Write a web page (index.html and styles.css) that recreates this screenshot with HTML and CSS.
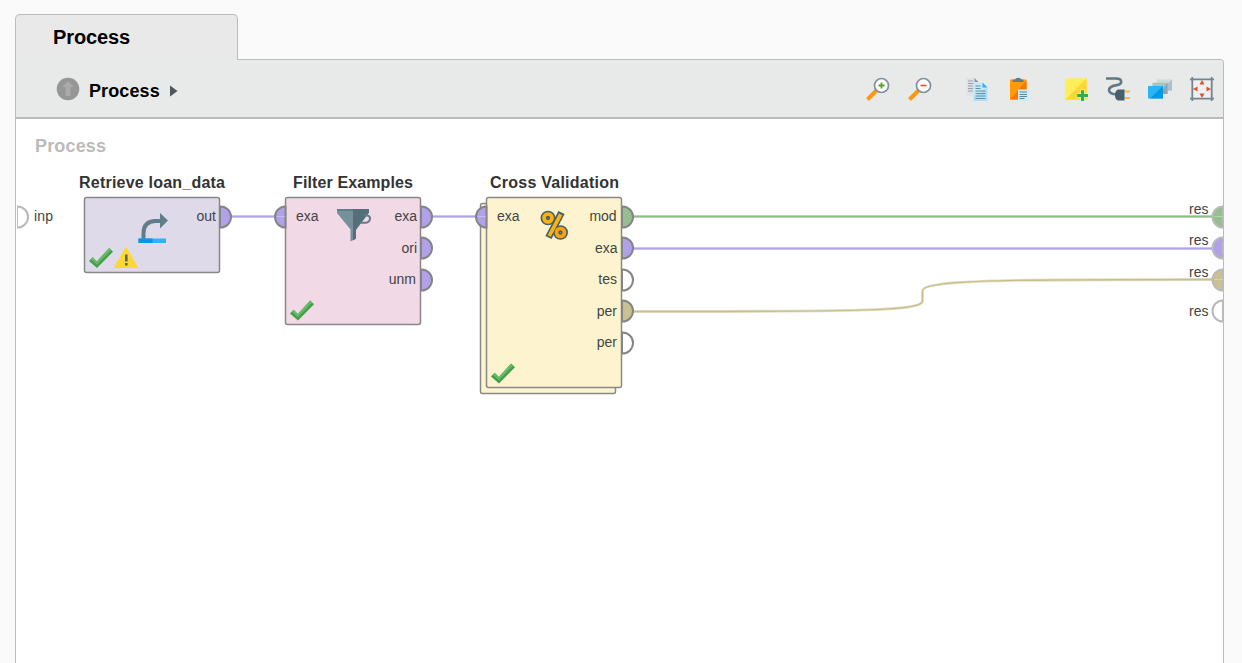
FILE: index.html
```html
<!DOCTYPE html>
<html lang="en">
<head>
<meta charset="utf-8">
<title>Process</title>
<link rel="stylesheet" href="styles.css">
</head>
<body>
<main class="workspace">
  <div class="tab">Process</div>
  <section class="panel">
    <header class="toolbar">
      <nav class="breadcrumb">
        <svg class="up" width="24" height="24" viewBox="0 0 24 24"><circle cx="12" cy="12" r="11.3" fill="#969696"/><path d="M12 4l5.800 6H14.500v9h-5v-9H6.200z" fill="#aaa"/></svg>
        <span class="crumb">Process</span>
        <svg class="chevron" width="8" height="12" viewBox="0 0 8 12"><path d="M0 .5L7.500 6 0 11.500z" fill="#50555e"/></svg>
      </nav>
      <div class="tools">
        <div class="group">
          <svg class="tool" viewBox="0 0 24 24"><path d="M1.500 22.500l9-9" stroke="#ff9811" stroke-width="4"/><circle cx="15.500" cy="8.500" r="7" fill="#fff" stroke="#8292a1" stroke-width="1.700"/><path d="M15.500 5.500v6M12.500 8.500h6" stroke="#58a51b" stroke-width="1.800"/></svg>
          <svg class="tool" viewBox="0 0 24 24"><path d="M1.500 22.500l9-9" stroke="#ff9811" stroke-width="4"/><circle cx="15.500" cy="8.500" r="7" fill="#fff" stroke="#8292a1" stroke-width="1.700"/><path d="M12.500 8.500h6" stroke="#ed4b24" stroke-width="1.600"/></svg>
        </div>
        <div class="group">
          <svg class="tool" viewBox="0 0 24 24"><path d="M1.500 1h8l4 4v14h-12z" fill="#dfe3e7"/><path d="M9.500 1v4h4z" fill="#8796a1"/><path d="M3 4h5M3 6.500h6M3 9h5M3 11.500h5M3 14h5" stroke="#8d99a1" stroke-width=".9"/><path d="M8.500 5.500h9l5 5V24h-14z" fill="#c3e9fc"/><path d="M8.500 20l14-9.500V24h-14z" fill="#b0e0f7"/><path d="M17.500 5.500v5h5z" fill="#27b3f5"/><path d="M10.500 9h5M10.500 11.500h5M10.500 14h10M10.500 16.500h10M10.500 19h10M10.500 21.500h10" stroke="#5a8799" stroke-width=".9"/></svg>
          <svg class="tool" viewBox="0 0 24 24"><path d="M3 2.500h16.500v20H3z" fill="#ff9a09"/><path d="M3 22.500l16.500-19v19z" fill="#ff7300"/><path d="M5.500 2.500h2.500Q8.500.8 11.200.8t3.300 1.700h2V5h-11z" fill="#617c8c"/><path d="M11 12.500h10.500V24H11z" fill="#c7eefb"/><path d="M12.500 15h7.500M12.500 17.500h7.500M12.500 19.500h7.500M12.500 21.500h5" stroke="#5a8799"/></svg>
        </div>
        <div class="group">
          <svg class="tool" viewBox="0 0 24 24"><path d="M1.300 1.300h21.400v21.400H1.300z" fill="#ffee58"/><path d="M1.300 22.700L22.700 1.300v21.400z" fill="#fdd835"/><path d="M18.500 12.500v11M13 18.500h9.500" stroke="#fff59a" stroke-width="4"/><path d="M18.500 13.300V24M13.200 18.600H24" stroke="#27ae60" stroke-width="3"/></svg>
          <svg class="tool" viewBox="0 0 24 24"><path d="M0 1.500h10c7 0 6.500 5.800 1 6.600-5 .7-8 1.800-8 5 0 3.500 3 4.400 8.500 4.400" fill="none" stroke="#607785" stroke-width="2.600"/><path d="M18.500 14.500h5.500M18.500 21h5.500" stroke="#ffb547" stroke-width="2"/><path d="M12 12.500h6.500v11H12q-3-1-3-5.500t3-5.500z" fill="#455f6c"/></svg>
          <svg class="tool" viewBox="0 0 24 24"><path d="M9 2.500h15v11H9z" fill="#cfd8dc"/><path d="M24 2.500v11H13z" fill="#b0bec5"/><path d="M4.500 5.700h15V17h-15z" fill="#b0bec5"/><path d="M19.500 5.700V17h-8z" fill="#90a4ae"/><path d="M0 9h15v12.500H0z" fill="#29b6f6"/><path d="M15 9v12.500H2z" fill="#0398e5"/></svg>
          <svg class="tool" viewBox="0 0 24 24"><path d="M2.500 2.500h19v19h-19z" fill="#edf0f0"/><path d="M0 2.300h24M0 21.700h24M2.300 0v24M21.700 0v24" stroke="#72858f" stroke-width="1.800"/><path d="M12 3l2.500 4.500h-5zM12 21l2.500-4.500h-5zM3 12l4.500-2.500v5zM21 12l-4.500-2.500v5z" fill="#e75024"/></svg>
        </div>
      </div>
    </header>
    <div class="canvas">
      <svg class="diagram" viewBox="17 119 1206 544" width="1206" height="544">
        <defs>
          <g id="tick"><path d="M0 13.500l3.700-3.700 4.100 4.200L20.200.5 24 4.200 8 20.500z" fill="#43a047"/><path d="M0 13.500l3.700-3.700 4.100 4.200L20.200.5l1.900 1.900L8 17.300 2 11.700z" fill="#66bb6a"/></g>
          <path id="outPort" d="M-.5-10.500h.5a10.500 10.500 0 0 1 0 21h-.5z"/>
          <path id="inPort" d="M0-10.500a10.500 10.500 0 0 0 0 21z"/>
        </defs>

        <text class="canvas-label" x="35" y="152" textLength="71">Process</text>

        <!-- connections -->
        <g class="wire purple"><path class="halo" d="M231 216.500h45M432 216.500h45M633 248.500h579"/><path d="M231 216.500h45M432 216.500h45M633 248.500h579"/></g>
        <g class="wire green"><path class="halo" d="M633 216.500h579"/><path d="M633 216.500h579"/></g>
        <g class="wire tan"><path class="halo" d="M633 311.500C850 311.500 922.500 311.500 922.500 301V291C922.500 279.500 1015 279.500 1212 279.500"/><path d="M633 311.500C850 311.500 922.500 311.500 922.500 301V291C922.500 279.500 1015 279.500 1212 279.500"/></g>

        <!-- process ports -->
        <g class="port edge">
          <use href="#outPort" x="17.500" y="217" fill="#fff"/>
          <use href="#inPort" x="1223" y="217" fill="#97be90"/>
          <use href="#inPort" x="1223" y="248" fill="#b1a1e9"/>
          <use href="#inPort" x="1223" y="280" fill="#cac191"/>
          <use href="#inPort" x="1223" y="311" fill="#fff"/>
        </g>
        <g class="port-text">
          <text x="34" y="221" textLength="19">inp</text>
          <g class="end"><text x="1208.500" y="214">res</text><text x="1208.500" y="245">res</text><text x="1208.500" y="277">res</text><text x="1208.500" y="316">res</text></g>
        </g>

        <!-- Retrieve -->
        <text class="title" x="79" y="188" textLength="146">Retrieve loan_data</text>
        <rect class="node" x="84.500" y="197.500" width="135" height="75" rx="2" fill="#dfdaea"/>
        <g class="port"><use href="#outPort" x="220.500" y="217" fill="#b1a1e9"/></g>
        <text class="port-text end" x="216" y="221">out</text>
        <path d="M143.500 239v-5.500q0-12.500 12-12.500h5" fill="none" stroke="#607d8b" stroke-width="4"/><path d="M160 213l8 7.500-8 8z" fill="#607d8b"/>
        <path d="M138.500 238.500h27.500v4.500h-27.500z" fill="#29b6f6"/><path d="M138.500 238.500h14v4.500h-14z" fill="#0398e5"/>
        <use href="#tick" x="89" y="247.500"/>
        <path d="M126 246.500l12.500 21.500h-25z" fill="#fdd835"/><path d="M126.300 254.500v7M126.300 263v2.500" stroke="#546570" stroke-width="2.600"/>

        <!-- Filter -->
        <text class="title" x="293" y="188" textLength="120">Filter Examples</text>
        <rect class="node" x="285.500" y="197.500" width="135" height="127" rx="2" fill="#f1d9e6"/>
        <g class="port"><use href="#inPort" x="285.500" y="217" fill="#b1a1e9"/><use href="#outPort" x="421.500" y="217" fill="#b1a1e9"/><use href="#outPort" x="421.500" y="248" fill="#b1a1e9"/><use href="#outPort" x="421.500" y="280" fill="#b1a1e9"/></g>
        <g class="port-text"><text x="296" y="221">exa</text><g class="end"><text x="417" y="221">exa</text><text x="417" y="253">ori</text><text x="416" y="284">unm</text></g></g>
        <path d="M337 209h32v3.500l-13 17.500v8.500l-5.500 3v-12L337 213z" fill="#78909c"/><path d="M353 209h16v3.500l-13 17v9l-3 2z" fill="#546e7a"/><path d="M337 210h16" stroke="#607d8b" stroke-width="2"/>
        <path d="M364 215.500h3c4.500 0 4 7.300-2 7.300h-5" fill="none" stroke="#607d8b" stroke-width="2"/>
        <use href="#tick" x="290" y="300"/>

        <!-- Cross Validation -->
        <text class="title" x="490" y="188" textLength="129">Cross Validation</text>
        <rect class="node" x="480.500" y="203.500" width="135" height="190" rx="2" fill="#fdf4cf"/>
        <rect class="node" x="486.500" y="197.500" width="135" height="190" rx="2" fill="#fdf4cf"/>
        <g class="port"><use href="#inPort" x="486.500" y="217" fill="#b1a1e9"/><use href="#outPort" x="622.500" y="217" fill="#97be90"/><use href="#outPort" x="622.500" y="248" fill="#b1a1e9"/><use href="#outPort" x="622.500" y="280" fill="#fff"/><use href="#outPort" x="622.500" y="311" fill="#cac191"/><use href="#outPort" x="622.500" y="343" fill="#fff"/></g>
        <g class="port-text"><text x="497" y="221">exa</text><g class="end"><text x="616.500" y="221" textLength="27">mod</text><text x="617.500" y="253">exa</text><text x="617" y="284">tes</text><text x="617" y="316">per</text><text x="617" y="347">per</text></g></g>
        <g fill="none"><g stroke="#455f6c" stroke-width="7"><ellipse cx="548" cy="218" rx="4" ry="3.800"/><ellipse cx="560.500" cy="232.500" rx="4" ry="3.800"/><path d="M561.500 212.500l-13 25"/></g><g stroke="#ffb30a" stroke-width="3.700"><circle cx="548" cy="218" r="4"/><circle cx="560.500" cy="232.500" r="4" stroke="#ffa20a"/><path d="M560.700 214.300l-11.500 21.700"/></g></g>
        <use href="#tick" x="491" y="363"/>

        <!-- wire ends over the filled ports -->
        <path class="tail" d="M277 216.500h8M478 216.500h8M1214 216.500h9M1214 279.500h9"/>
      </svg>
    </div>
  </section>
</main>
</body>
</html>
```
FILE: styles.css
```css
* { box-sizing: border-box; }
body {
  margin: 0;
  background: #fafafa;
  color: #000;
  font-family: "Liberation Sans", Arial, sans-serif;
  overflow: hidden;
}
.workspace {
  display: flex;
  flex-direction: column;
  height: 663px;
  padding: 14px 18px 0 15px;
}
.tab {
  z-index: 1;
  width: 223px;
  height: 46px;
  padding: 0 0 0 37px;
  margin-bottom: -1px;
  border: solid #bbb;
  border-width: 1px 1.5px 0 1px;
  border-radius: 5px 5px 0 0;
  background: #e9e9e9;
  font-size: 20px;
  font-weight: bold;
  line-height: 44px;
  letter-spacing: -.1px;
}
.panel {
  display: flex;
  flex: 1;
  flex-direction: column;
  min-height: 0;
  padding-left: 1px;
  border: solid #bbb;
  border-width: 1px 1px 0 1px;
  border-radius: 0 4px 0 0;
  background: #fff;
}
.toolbar {
  display: flex;
  flex: none;
  align-items: center;
  justify-content: space-between;
  height: 59px;
  margin-left: -1px;
  padding: 0 9px 0 40px;
  border-bottom: 2px solid #bababa;
  border-radius: 0 3px 0 0;
  background: #e8eae9;
}
.breadcrumb { display: flex; align-items: center; }
.up { margin-top: 1px; }
.crumb {
  margin: 4px 10px 0 9px;
  font-size: 18px;
  font-weight: bold;
  line-height: 22px;
  letter-spacing: .1px;
}
.chevron { margin-top: 4px; }
.tools { display: flex; gap: 33px; padding-top: 1px; }
.group { display: flex; gap: 18px; }
.tool { display: block; width: 24px; height: 24px; }
.canvas { flex: 1; min-height: 0; }
.diagram { display: block; }
.canvas-label { fill: #bbb; font-size: 18px; font-weight: bold; }
.title { fill: #333; font-size: 16px; font-weight: bold; }
.port-text { fill: #444; font-size: 14px; }
.end { text-anchor: end; }
.node { stroke: #888; stroke-width: 1.5; }
.port { stroke: #858585; stroke-width: 2; }
.edge { stroke: #b9b9b9; }
.wire { fill: none; stroke-width: 1.3; }
.halo { stroke-width: 2.8; opacity: .5; }
.purple { stroke: #b1a1e9; }
.green { stroke: #8fbc89; }
.tan { stroke: #c9bf8d; }
.tail { fill: none; stroke: #fff; stroke-opacity: .3; }
```
